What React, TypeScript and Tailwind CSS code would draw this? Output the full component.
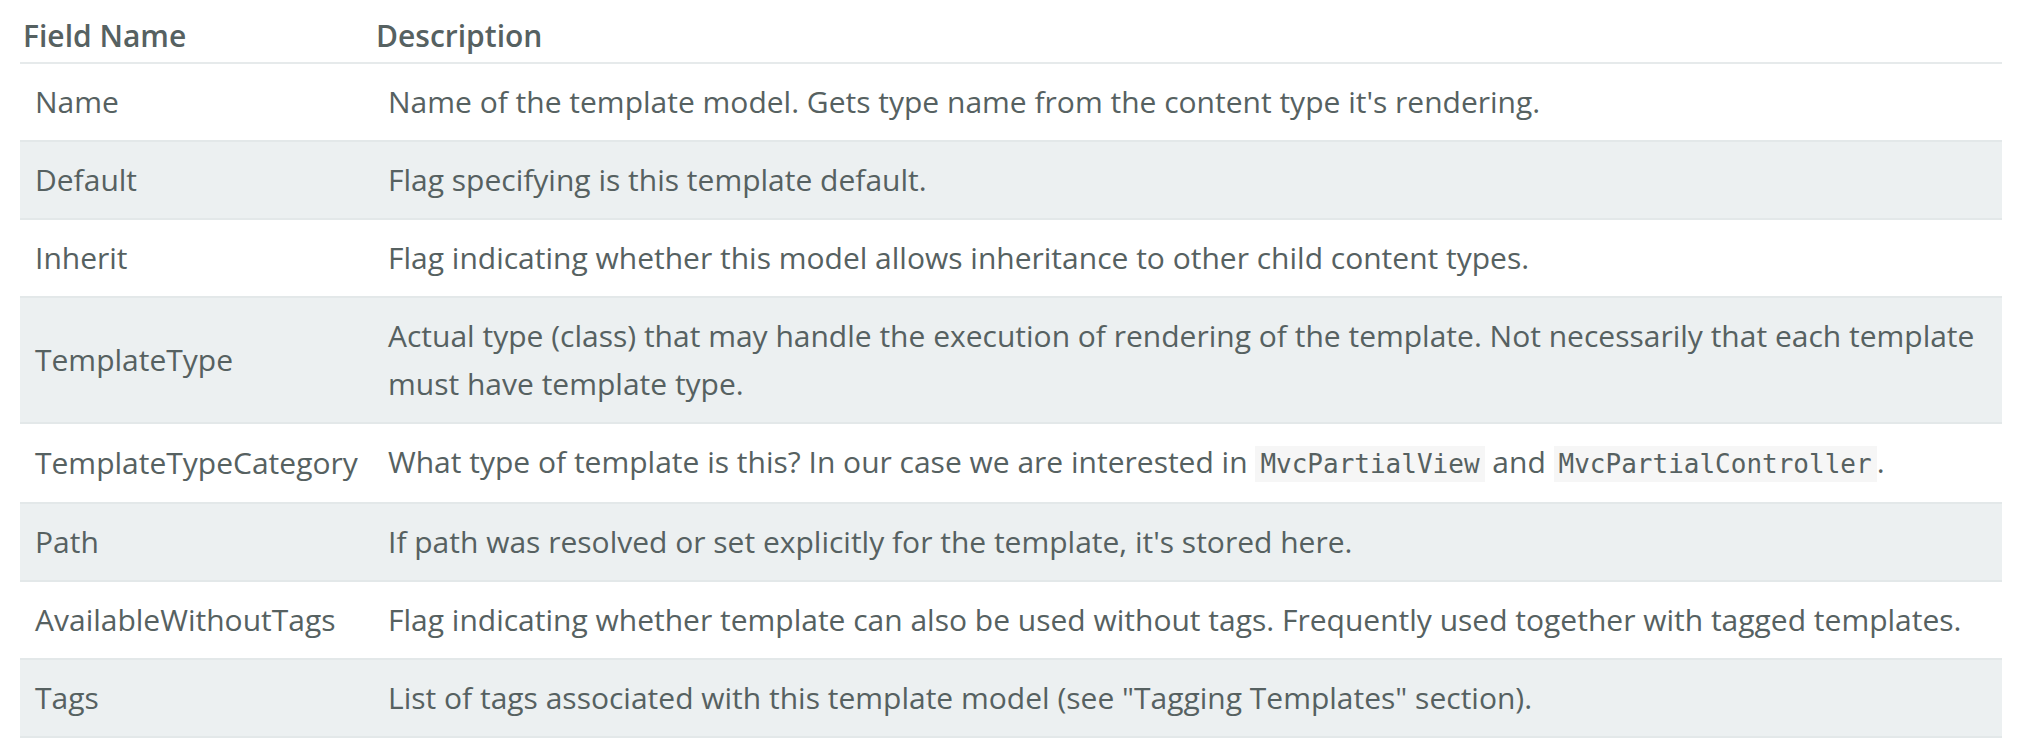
const rows: { name: string; desc: React.ReactNode }[] = [
  {
    name: "Name",
    desc: "Name of the template model. Gets type name from the content type it's rendering.",
  },
  { name: "Default", desc: "Flag specifying is this template default." },
  {
    name: "Inherit",
    desc: "Flag indicating whether this model allows inheritance to other child content types.",
  },
  {
    name: "TemplateType",
    desc: "Actual type (class) that may handle the execution of rendering of the template. Not necessarily that each template must have template type.",
  },
  {
    name: "TemplateTypeCategory",
    desc: (
      <>
        What type of template is this? In our case we are interested in{" "}
        <Code>MvcPartialView</Code> and <Code>MvcPartialController</Code>.
      </>
    ),
  },
  {
    name: "Path",
    desc: "If path was resolved or set explicitly for the template, it's stored here.",
  },
  {
    name: "AvailableWithoutTags",
    desc: "Flag indicating whether template can also be used without tags. Frequently used together with tagged templates.",
  },
  {
    name: "Tags",
    desc: 'List of tags associated with this template model (see "Tagging Templates" section).',
  },
];

function Code({ children }: { children: React.ReactNode }) {
  return (
    <code className="bg-[#f6f6f6] px-[5px] py-[3px] font-['DejaVu_Sans_Mono',monospace] text-[26px]">
      {children}
    </code>
  );
}

export default function App() {
  return (
    <div className="min-h-screen bg-white px-[20px] font-['Open_Sans',sans-serif] text-[30px] leading-[48px] text-[#566161]">
      <table className="w-full border-collapse text-left">
        <thead>
          <tr className="border-b-2 border-[#e6eaeb]">
            <th className="w-[353px] pl-[3px] pt-[12px] pb-[2px] font-semibold">
              Field Name
            </th>
            <th className="pl-[3px] pt-[12px] pb-[2px] font-semibold">Description</th>
          </tr>
        </thead>
        <tbody>
          {rows.map((row, i) => (
            <tr
              key={row.name}
              className={`border-b-2 border-[#e3e8e9] ${i % 2 === 1 ? "bg-[#ecf0f1]" : "bg-white"}`}
            >
              <td className="px-[15px] py-[14px] align-middle">{row.name}</td>
              <td className="px-[15px] py-[14px] align-middle">{row.desc}</td>
            </tr>
          ))}
        </tbody>
      </table>
    </div>
  );
}
